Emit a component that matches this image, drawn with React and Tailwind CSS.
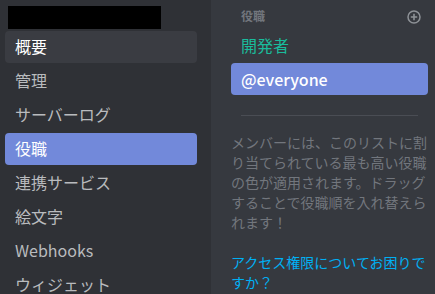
import React from "react";

const font = { fontFamily: '"Noto Sans CJK JP", "Noto Sans", sans-serif' };

function Item({ label, state }) {
  const cls =
    state === "selected"
      ? "bg-[#7289da] text-white"
      : state === "hover"
      ? "bg-[#3a3c42] text-white"
      : "text-[#b9bbbe]";
  return (
    <div className={`w-[192px] h-[32px] mb-[2px] rounded-[4px] px-[10px] pb-[2px] flex items-center text-[16px] leading-[20px] ${cls}`}>
      {label}
    </div>
  );
}

export default function App() {
  return (
    <div
      className="w-[435px] h-[294px] overflow-hidden flex bg-[#36393f] antialiased"
      style={font}
    >
      <div className="w-[211px] shrink-0 bg-[#2f3136] pl-[5px] pt-[6px]">
        <div className="ml-[3px] w-[153px] h-[23px] bg-black mb-[2px]" />
        <Item label="概要" state="hover" />
        <Item label="管理" />
        <Item label="サーバーログ" />
        <Item label="役職" state="selected" />
        <Item label="連携サービス" />
        <Item label="絵文字" />
        <Item label="Webhooks" />
        <Item label="ウィジェット" />
      </div>
      <div className="flex-1 pl-[20px] pt-[8px]">
        <div className="w-[197px]">
          <div className="h-[16px] mb-[5px] pl-[10px] pr-[12px] flex items-center justify-between">
            <span className="text-[12px] leading-[16px] font-bold text-[#72767d]">役職</span>
            <svg width="14" height="14" viewBox="0 0 14 14" className="mt-[1px] -mr-[5px]">
              <circle cx="7" cy="7" r="6" fill="none" stroke="#8e9297" strokeWidth="1.5" />
              <path d="M7 3.8v6.4M3.8 7h6.4" stroke="#8e9297" strokeWidth="1.6" />
            </svg>
          </div>
          <div className="h-[32px] mb-[2px] px-[10px] pb-[1px] flex items-center text-[16px] leading-[20px] text-[#1abc9c]">
            開発者
          </div>
          <div className="h-[32px] rounded-[4px] px-[10px] pb-[1px] flex items-center bg-[#7289da] text-white text-[16px] leading-[20px] font-medium">
            @everyone
          </div>
          <div className="mt-[20px] mx-[10px] h-px bg-[#4a4d54]" />
          <div className="mt-[16px] text-[14px] leading-[20px] text-[#72767d]">
            メンバーには、このリストに割り当てられている最も高い役職の色が適用されます。ドラッグすることで役職順を入れ替えられます！
          </div>
          <div className="mt-[20px] text-[14px] leading-[20px] text-[#00b0f4]">
            アクセス権限についてお困りですか？
          </div>
        </div>
      </div>
    </div>
  );
}
